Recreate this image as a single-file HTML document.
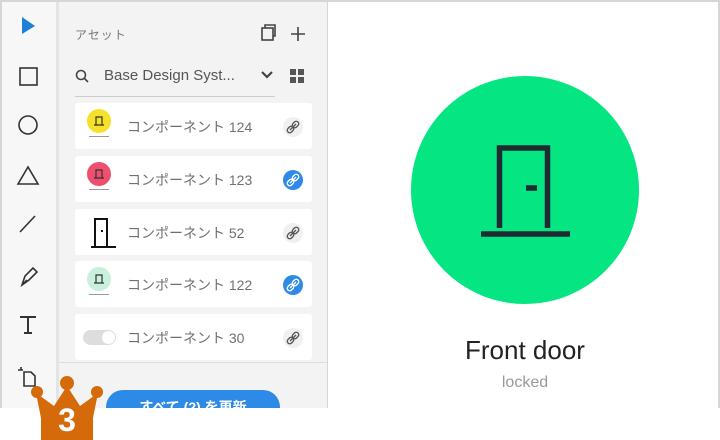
<!DOCTYPE html>
<html><head><meta charset="utf-8"><style>
*{margin:0;padding:0;box-sizing:border-box}
body{width:720px;height:440px;background:#fff;position:relative;overflow:hidden;font-family:"Liberation Sans","Noto Sans CJK JP",sans-serif}
.frame{position:absolute;left:0;top:0;width:720px;height:408px;background:#d6d6d6;overflow:hidden}
.tools{position:absolute;left:2px;top:2px;width:54px;height:406px;background:#f7f7f7}
.div{position:absolute;left:56px;top:2px;width:3px;height:406px;background:#e4e4e4}
.panel{position:absolute;left:59px;top:2px;width:268px;height:406px;background:#f3f3f3}
.canvas{position:absolute;left:328px;top:2px;width:390px;height:406px;background:#fff}
.card{position:absolute;left:16px;width:237px;height:46px;background:#fff;border-radius:3px}
.card .t{position:absolute;left:52px;top:14px;font-size:14px;color:#707070}
.link{position:absolute;left:208px;top:14px;width:20px;height:20px;border-radius:50%;background:#f0f0f0}
.link.b{background:#2d8ae6}
.link svg{position:absolute;left:0;top:0}
.th{position:absolute;left:12px;top:6px;width:24px;height:24px;border-radius:50%}
.th svg{position:absolute;left:0;top:0}
.cap{position:absolute;left:14px;top:33px;width:20px;height:1px;background:#999}
</style></head><body>
<div class="frame">
<div class="tools">
<svg width="54" height="406" style="position:absolute;left:0;top:0" fill="none" stroke="#333" stroke-width="1.6">
<path d="M20 15 L33 24 L20 32 Z" fill="#1c7fd8" stroke="none"/>
<rect x="18" y="66" width="17" height="17"/>
<circle cx="26" cy="123" r="9"/>
<path d="M16 182 L26 165 L36 182 Z"/>
<path d="M18 230 L33 214"/>
<path d="M20 283 L23 274 L31 266 L35 270 L27 278 Z M20 283 L25 278"/>
<path d="M18 315 H34 M26 315 V331 M22 331 H30" stroke-width="2"/>
<path d="M22 370 H29 L33 374 V384 H22 Z M16 368 H21 M19 365 V368"/>
</svg>
</div>
<div class="div"></div>
<div class="panel">
<div style="position:absolute;left:16px;top:24px;font-size:12px;color:#777;letter-spacing:1px">アセット</div>
<svg width="268" height="100" style="position:absolute;left:0;top:0" fill="none" stroke="#444" stroke-width="1.6">
<rect x="203" y="26" width="11" height="12"/><path d="M206 26 V23 H216 V34 H214" />
<path d="M232 32 H246 M239 25 V39"/>
<circle cx="22" cy="73" r="4.5"/><path d="M25 76 L29 80"/>
<path d="M203 70 L208 75 L213 70" stroke-width="2.2"/>
<g fill="#555" stroke="none"><rect x="231" y="67" width="6" height="6"/><rect x="239" y="67" width="6" height="6"/><rect x="231" y="75" width="6" height="6"/><rect x="239" y="75" width="6" height="6"/></g>
</svg>
<div style="position:absolute;left:45px;top:65px;font-size:15px;color:#555">Base Design Syst...</div>
<div style="position:absolute;left:16px;top:94px;width:200px;height:1px;background:#ccc"></div>
<div class="card" style="top:101px"><div class="th" style="background:#f5e02a"><svg width="24" height="24" fill="none" stroke="#333" stroke-width="1.2"><path d="M9 16 V8 H15 V16 M7 16 H17"/></svg></div><div class="cap"></div><div class="t">コンポーネント 124</div><div class="link"><svg width="20" height="20" fill="none" stroke="#555" stroke-width="1.4"><path d="M7 13 L13 7"/><rect x="5" y="9" width="5" height="7" rx="2.5" transform="rotate(45 7.5 12.5)"/><rect x="10" y="4" width="5" height="7" rx="2.5" transform="rotate(45 12.5 7.5)"/></svg></div></div>
<div class="card" style="top:154px"><div class="th" style="background:#ee4f6e"><svg width="24" height="24" fill="none" stroke="#333" stroke-width="1.2"><path d="M9 16 V8 H15 V16 M7 16 H17"/></svg></div><div class="cap"></div><div class="t">コンポーネント 123</div><div class="link b"><svg width="20" height="20" fill="none" stroke="#fff" stroke-width="1.4"><path d="M7 13 L13 7"/><rect x="5" y="9" width="5" height="7" rx="2.5" transform="rotate(45 7.5 12.5)"/><rect x="10" y="4" width="5" height="7" rx="2.5" transform="rotate(45 12.5 7.5)"/></svg></div></div>
<div class="card" style="top:207px"><svg width="40" height="46" style="position:absolute;left:8px;top:0" fill="none" stroke="#111" stroke-width="2"><path d="M12 38 V10 H24 V38 M8 38 H33"/><path d="M18 22 H20"/></svg><div class="t">コンポーネント 52</div><div class="link"><svg width="20" height="20" fill="none" stroke="#555" stroke-width="1.4"><path d="M7 13 L13 7"/><rect x="5" y="9" width="5" height="7" rx="2.5" transform="rotate(45 7.5 12.5)"/><rect x="10" y="4" width="5" height="7" rx="2.5" transform="rotate(45 12.5 7.5)"/></svg></div></div>
<div class="card" style="top:259px"><div class="th" style="background:#c8f0dc"><svg width="24" height="24" fill="none" stroke="#333" stroke-width="1.2"><path d="M9 16 V8 H15 V16 M7 16 H17"/></svg></div><div class="cap"></div><div class="t">コンポーネント 122</div><div class="link b"><svg width="20" height="20" fill="none" stroke="#fff" stroke-width="1.4"><path d="M7 13 L13 7"/><rect x="5" y="9" width="5" height="7" rx="2.5" transform="rotate(45 7.5 12.5)"/><rect x="10" y="4" width="5" height="7" rx="2.5" transform="rotate(45 12.5 7.5)"/></svg></div></div>
<div class="card" style="top:312px"><div style="position:absolute;left:8px;top:16px;width:33px;height:15px;border-radius:8px;background:#ddd"></div><div style="position:absolute;left:27px;top:17px;width:13px;height:13px;border-radius:50%;background:#fff"></div><div class="t">コンポーネント 30</div><div class="link"><svg width="20" height="20" fill="none" stroke="#555" stroke-width="1.4"><path d="M7 13 L13 7"/><rect x="5" y="9" width="5" height="7" rx="2.5" transform="rotate(45 7.5 12.5)"/><rect x="10" y="4" width="5" height="7" rx="2.5" transform="rotate(45 12.5 7.5)"/></svg></div></div>
<div style="position:absolute;left:0;top:360px;width:268px;height:1px;background:#ddd"></div>
<div style="position:absolute;left:47px;top:388px;width:174px;height:34px;border-radius:17px;background:#2d8ae6;color:#fff;font-size:14px;font-weight:bold;text-align:center;line-height:34px">すべて (2) を更新</div>
</div>
<div class="canvas">
<div style="position:absolute;left:83px;top:74px;width:228px;height:228px;border-radius:50%;background:#05e582"></div>
<svg width="390" height="300" style="position:absolute;left:0;top:0" fill="none" stroke="#1e2b32" stroke-width="5.5"><path d="M171.5 226 V146 H219.5 V226"/><path d="M153 232 H242"/><path d="M198 186 H209"/></svg>
<div style="position:absolute;left:0;width:394px;top:333px;text-align:center;font-size:26px;color:#222">Front door</div>
<div style="position:absolute;left:0;width:394px;top:372px;text-align:center;font-size:16px;color:#999">locked</div>
</div>
</div>
<svg width="720" height="440" style="position:absolute;left:0;top:0">
<g fill="#d46a0a">
<path d="M36 393 L54 406 L67 386 L80 406 L98 393 L93 418 V440 H41 V418 Z"/>
<circle cx="37" cy="392" r="6"/><circle cx="67" cy="383" r="7"/><circle cx="97" cy="392" r="6"/>
</g>
<text x="67" y="431" text-anchor="middle" font-family="Liberation Sans" font-weight="bold" font-size="32" fill="#fff">3</text>
</svg>
</body></html>
